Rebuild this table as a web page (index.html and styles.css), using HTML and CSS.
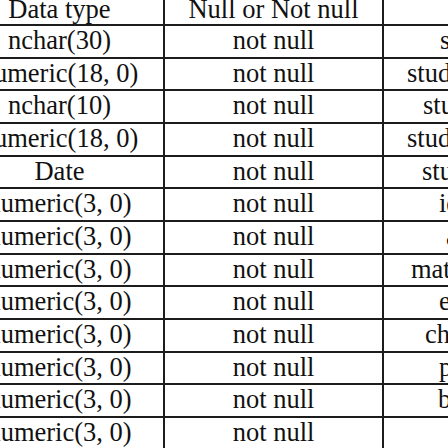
FILE: index.html
```html
<!DOCTYPE html>
<html>
<head>
<meta charset="utf-8">
<link rel="stylesheet" href="styles.css">
</head>
<body>
<div class="table">
  <div class="cell head">Data type</div><div class="cell head">Null or Not null</div><div class="cell c3"></div>
  <div class="cell">nchar(30)</div><div class="cell">not null</div><div class="cell c3 r1">stu</div>
  <div class="cell">numeric(18, 0)</div><div class="cell">not null</div><div class="cell c3 r2">stude</div>
  <div class="cell">nchar(10)</div><div class="cell">not null</div><div class="cell c3 r3">stu</div>
  <div class="cell">numeric(18, 0)</div><div class="cell">not null</div><div class="cell c3 r4">stude</div>
  <div class="cell">Date</div><div class="cell">not null</div><div class="cell c3 r5">stu</div>
  <div class="cell">numeric(3, 0)</div><div class="cell">not null</div><div class="cell c3 r6">id</div>
  <div class="cell">numeric(3, 0)</div><div class="cell">not null</div><div class="cell c3 r7">a</div>
  <div class="cell">numeric(3, 0)</div><div class="cell">not null</div><div class="cell c3 r8">math</div>
  <div class="cell">numeric(3, 0)</div><div class="cell">not null</div><div class="cell c3 r9">en</div>
  <div class="cell">numeric(3, 0)</div><div class="cell">not null</div><div class="cell c3 r10">chi</div>
  <div class="cell">numeric(3, 0)</div><div class="cell">not null</div><div class="cell c3 r11">ph</div>
  <div class="cell">numeric(3, 0)</div><div class="cell">not null</div><div class="cell c3 r12">bi</div>
  <div class="cell">numeric(3, 0)</div><div class="cell">not null</div><div class="cell c3"></div>
</div>
</body>
</html>
```

FILE: styles.css
```css
html, body {
  margin: 0;
  padding: 0;
  width: 448px;
  height: 448px;
  overflow: hidden;
  background: #fff;
}

body {
  font-family: "Liberation Serif", "Times New Roman", serif;
  font-size: 26.5px;
  color: #111;
}

.table {
  display: grid;
  grid-template-columns: 207px 217px 200px;
  grid-auto-rows: 30.67px;
  gap: 2px;
  background: #1c1c1c;
  width: max-content;
  margin: -6.67px 0 0 -44px;
}

.cell {
  background: #fff;
  text-align: center;
  line-height: 28.67px;
  padding-bottom: 2px;
  white-space: nowrap;
  overflow: hidden;
}

.head {
  padding-top: 1.5px;
  padding-bottom: 0;
  line-height: 28.67px;
}

.c3 { text-align: left; }
.r1 { padding-left: 56px; }
.r2 { padding-left: 23px; }
.r3 { padding-left: 39px; }
.r4 { padding-left: 23px; }
.r5 { padding-left: 38px; }
.r6 { padding-left: 55px; }
.r7 { padding-left: 62px; }
.r8 { padding-left: 27px; }
.r9 { padding-left: 55px; }
.r10 { padding-left: 41px; }
.r11 { padding-left: 55px; }
.r12 { padding-left: 54px; }
```
